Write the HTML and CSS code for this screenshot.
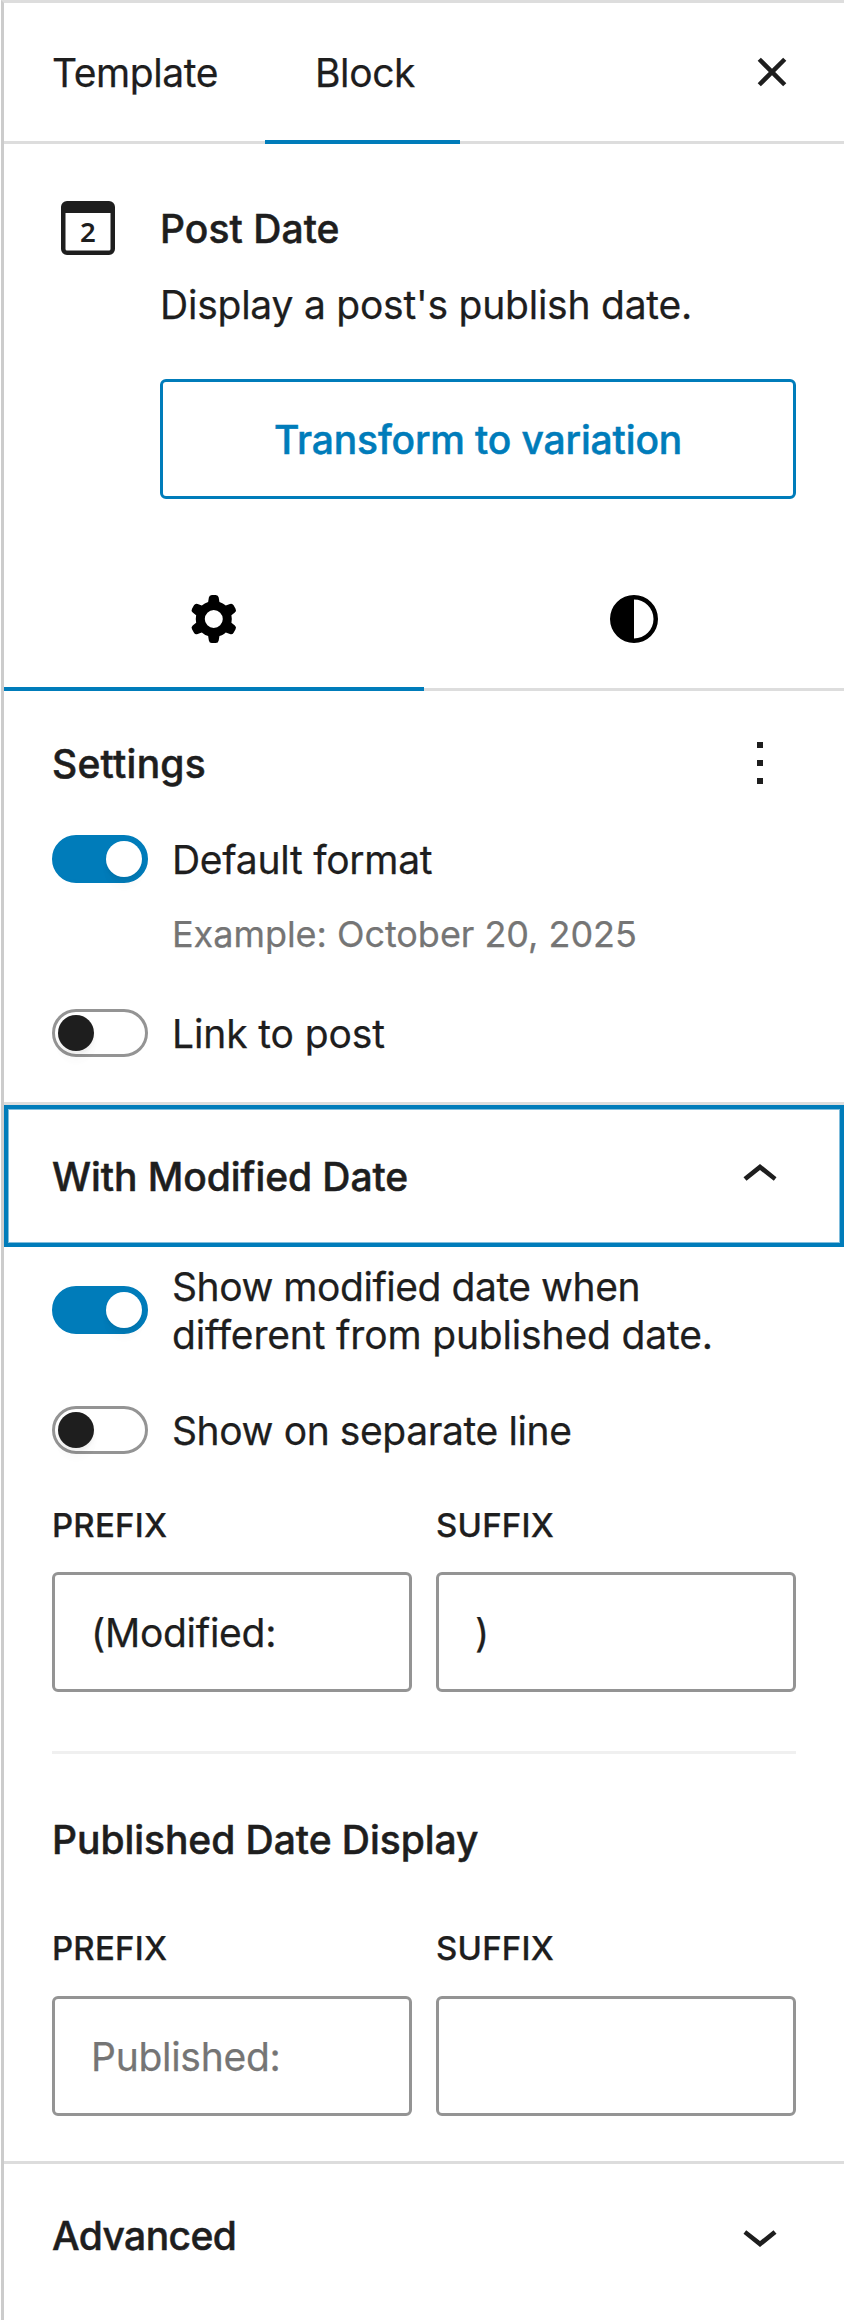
FILE: index.html
```html
<!DOCTYPE html>
<html lang="en">
<head>
<meta charset="utf-8">
<title>Block settings</title>
<link rel="stylesheet" href="styles.css">
</head>
<body>
<aside class="sidebar">
  <header class="header">
    <div class="tab"><span class="t-template">Template</span></div>
    <div class="tab tab-active"><span class="t-block">Block</span></div>
    <svg class="icon close" viewBox="0 0 24 24"><path d="M12 13.06l3.712 3.713 1.061-1.06L13.061 12l3.712-3.712-1.06-1.06L12 10.938 8.288 7.227l-1.061 1.06L10.939 12l-3.712 3.712 1.06 1.061L12 13.061z"/></svg>
  </header>

  <section class="card">
    <svg class="icon" viewBox="0 0 24 24"><path fill-rule="evenodd" d="M19.5 7h-15v12a.5.5 0 00.5.5h14a.5.5 0 00.5-.5V7zM3 7V5a2 2 0 012-2h14a2 2 0 012 2v14a2 2 0 01-2 2H5a2 2 0 01-2-2V7z"/><text class="day" x="12" y="16.6" text-anchor="middle">2</text></svg>
    <div class="card-body">
      <h2 class="heading card-title"><span class="t-postdate">Post Date</span></h2>
      <p class="card-text"><span class="t-desc">Display a post's publish date.</span></p>
      <button class="transform"><span class="t-transform">Transform to variation</span></button>
    </div>
  </section>

  <nav class="subtabs">
    <div class="subtab subtab-active"><svg class="icon" viewBox="0 0 24 24"><path fill-rule="evenodd" d="M10.289 4.836A1 1 0 0111.275 4h1.306a1 1 0 01.987.836l.244 1.466c.787.26 1.503.679 2.108 1.218l1.393-.522a1 1 0 011.216.437l.653 1.13a1 1 0 01-.23 1.273l-1.148.944a6.025 6.025 0 010 2.435l1.149.946a1 1 0 01.23 1.272l-.653 1.13a1 1 0 01-1.216.437l-1.394-.522c-.605.54-1.32.958-2.108 1.218l-.244 1.466a1 1 0 01-.987.836h-1.306a1 1 0 01-.986-.836l-.244-1.466a5.995 5.995 0 01-2.108-1.218l-1.394.522a1 1 0 01-1.217-.436l-.653-1.131a1 1 0 01.23-1.272l1.149-.946a6.026 6.026 0 010-2.435l-1.148-.944a1 1 0 01-.23-1.272l.653-1.131a1 1 0 011.217-.437l1.393.522a5.994 5.994 0 012.108-1.218l.244-1.466zM14.929 12a3 3 0 11-6 0 3 3 0 016 0z"/></svg></div>
    <div class="subtab"><svg class="icon" viewBox="0 0 24 24"><path fill-rule="evenodd" d="M20 12a8 8 0 11-16 0 8 8 0 0116 0zm-1.5 0a6.5 6.5 0 01-6.5 6.5v-13a6.5 6.5 0 016.5 6.5z"/></svg></div>
  </nav>

  <section class="settings">
    <div class="bar">
      <h2 class="heading"><span class="t-settings">Settings</span></h2>
      <svg class="icon" viewBox="0 0 24 24"><path d="M13 19h-2v-2h2v2zm0-6h-2v-2h2v2zm0-6h-2V5h2v2z"/></svg>
    </div>
    <div class="row">
      <span class="toggle toggle-on"><span class="thumb"></span></span>
      <span class="label"><span class="t-default">Default format</span></span>
    </div>
    <p class="help"><span class="t-example">Example: October 20, 2025</span></p>
    <div class="row">
      <span class="toggle"><span class="thumb"></span></span>
      <span class="label"><span class="t-link">Link to post</span></span>
    </div>
  </section>

  <section class="modified">
    <div class="panel-toggle">
      <h2 class="heading"><span class="t-modified">With Modified Date</span></h2>
      <svg class="icon" viewBox="0 0 24 24"><path d="M6.5 12.4L12 8l5.5 4.4-.9 1.2L12 10l-4.5 3.6-1-1.2z"/></svg>
    </div>
    <div class="row row-double">
      <span class="toggle toggle-on"><span class="thumb"></span></span>
      <span class="label"><span class="t-show1">Show modified date when</span><br><span class="t-show2">different from published date.</span></span>
    </div>
    <div class="row">
      <span class="toggle"><span class="thumb"></span></span>
      <span class="label"><span class="t-separate">Show on separate line</span></span>
    </div>
    <div class="fields">
      <label class="field"><span class="field-label">Prefix</span><span class="input"><span class="t-input">(Modified:</span></span></label>
      <label class="field"><span class="field-label">Suffix</span><span class="input">)</span></label>
    </div>
    <hr class="rule">
    <h2 class="heading"><span class="t-published">Published Date Display</span></h2>
    <div class="fields fields-published">
      <label class="field"><span class="field-label">Prefix</span><span class="input placeholder"><span class="t-input">Published:</span></span></label>
      <label class="field"><span class="field-label">Suffix</span><span class="input"></span></label>
    </div>
  </section>

  <section class="advanced">
    <h2 class="heading"><span class="t-advanced">Advanced</span></h2>
    <svg class="icon" viewBox="0 0 24 24"><path d="M17.5 11.6L12 16l-5.5-4.4.9-1.2L12 14l4.5-3.6 1 1.2z"/></svg>
  </section>
</aside>
</body>
</html>
```
FILE: styles.css
```css
* { box-sizing: border-box; }
body {
  margin: 0;
  background: #fff;
  color: #1e1e1e;
  font: 400 39px/48px Inter, "Liberation Sans", sans-serif;
  letter-spacing: -0.4px;
  -webkit-text-stroke: 0.25px;
}
h2, p { margin: 0; }
.heading {
  font-size: 39px;
  font-weight: 500;
  line-height: 48px;
  white-space: nowrap;
  -webkit-text-stroke: 0.5px;
}
.sidebar {
  height: 2320px;
  margin-left: 1px;
  border-left: 3px solid #ccc;
  border-top: 3px solid #ddd;
  overflow: hidden;
}
.icon { display: block; width: 72px; height: 72px; flex: none; fill: #1e1e1e; }

/* Optical tracking per string */
.t-postdate { letter-spacing: 0.05px; }
.t-desc { letter-spacing: -0.23px; }
.t-transform { letter-spacing: -0.15px; }
.t-settings { letter-spacing: 0.25px; }
.t-default { letter-spacing: -0.28px; }
.t-example { letter-spacing: -0.04px; }
.t-link { letter-spacing: -0.12px; }
.t-modified { letter-spacing: -0.07px; }
.t-show1 { letter-spacing: -0.46px; }
.t-show2 { letter-spacing: -0.17px; }
.t-input { letter-spacing: -0.28px; }
.t-published { letter-spacing: -0.05px; }
.t-advanced { letter-spacing: -0.6px; }

.header { display: flex; height: 141px; box-shadow: inset 0 -3px #ddd; }
.tab { display: flex; align-items: center; width: 261px; padding: 0 0 1px 48px; white-space: nowrap; }
.tab-active { width: 195px; padding-left: 50px; box-shadow: inset 0 -4px #007cba; }
.close { margin: 33px 36px 0 auto; }

.card { display: flex; gap: 36px; height: 403px; padding: 48px 48px 0; }
.day { font: 600 9.2px "Noto Sans", sans-serif; letter-spacing: 0; -webkit-text-stroke: 0; }
.card-title { margin-top: 13px; }
.card-text { margin-top: 28px; white-space: nowrap; }
.card-body { flex: 1; }
.transform {
  display: block;
  width: 100%;
  height: 120px;
  margin-top: 50px;
  padding: 2px 0 0;
  border: 3px solid #007cba;
  border-radius: 6px;
  background: #fff;
  color: #007cba;
  font: inherit;
  font-weight: 500;
  letter-spacing: inherit;
  -webkit-text-stroke: 0.5px;
}

.subtabs { display: flex; height: 144px; box-shadow: inset 0 -3px #ddd; }
.subtab { display: flex; flex: 1; align-items: center; justify-content: center; }
.subtab .icon { fill: #000; }
.subtab-active { box-shadow: inset 0 -4px #007cba; }

.settings { height: 411px; padding: 36px 48px 0; }
.bar { display: flex; align-items: center; justify-content: space-between; height: 72px; margin-bottom: 36px; }
.bar .heading { padding-top: 2px; }
.row { display: flex; align-items: center; gap: 24px; height: 48px; white-space: nowrap; }
.label { padding-top: 2px; }
.toggle {
  display: flex;
  align-items: center;
  flex: none;
  width: 96px;
  height: 48px;
  padding: 0 3px;
  border: 3px solid #949494;
  border-radius: 24px;
}
.thumb {
  width: 36px;
  height: 36px;
  border-radius: 50%;
  background: #1e1e1e;
  box-shadow: 0 3px 3px #00000008, 0 3px 6px #00000005, 0 9px 9px #00000005, 0 12px 12px #00000003;
}
.toggle-on { justify-content: flex-end; border-color: #007cba; background: #007cba; }
.toggle-on .thumb { background: #fff; }
.help { margin: 27px 0 51px 120px; font-size: 36px; color: #757575; white-space: nowrap; }

.modified { height: 1059px; padding: 0 48px; border-top: 3px solid #ddd; }
.panel-toggle {
  display: flex;
  align-items: center;
  justify-content: space-between;
  height: 142px;
  margin: 0 -48px 15px;
  padding: 1px 44px 1px 44px;
  border: 4px solid #007cba;
  box-shadow: inset 0 0 0 1px #80bddc;
}
.panel-toggle .heading { padding-top: 2px; }
.row-double { height: 96px; margin-bottom: 48px; }
.fields { display: grid; grid-template-columns: 1fr 1fr; gap: 24px; margin-top: 47px; }
.fields-published { margin-top: 60px; }
.field { display: block; }
.field-label {
  display: block;
  height: 48px;
  margin-bottom: 23px;
  font-size: 33px;
  font-weight: 500;
  letter-spacing: 0.2px;
  text-transform: uppercase;
}
.fields-published .field-label { margin-bottom: 24px; }
.input {
  display: block;
  height: 120px;
  padding: 34px 36px 0;
  border: 3px solid #949494;
  border-radius: 6px;
}
.placeholder { color: #757575; }
.rule { height: 3px; margin: 59px 0 62px; border: 0; background: #f0f0f0; }

.advanced { display: flex; align-items: center; justify-content: space-between; height: 144px; padding: 0 48px; border-top: 3px solid #ddd; }
.advanced .heading { padding-top: 2px; }
```
